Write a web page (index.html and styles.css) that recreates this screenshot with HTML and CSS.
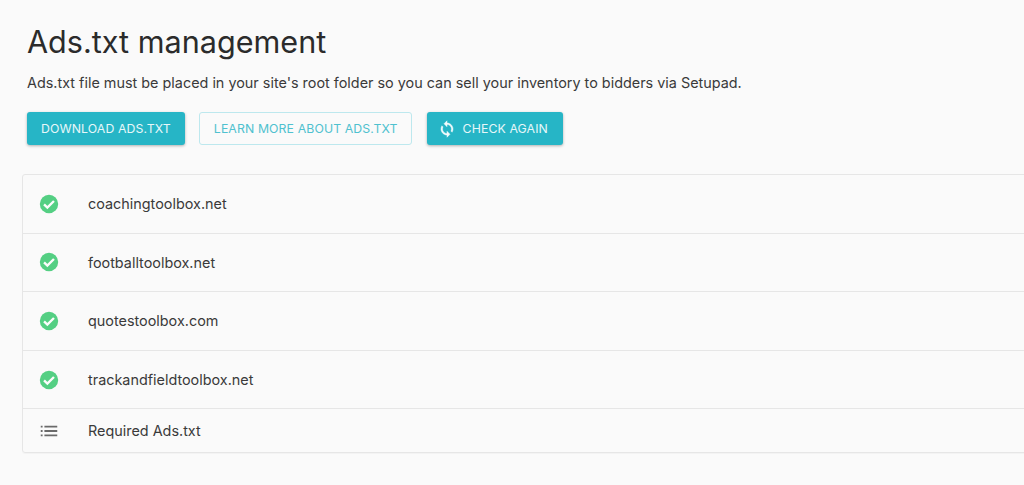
FILE: index.html
```html
<!DOCTYPE html>
<html lang="en">
<head>
<meta charset="utf-8">
<title>Ads.txt management</title>
<link rel="stylesheet" href="styles.css">
</head>
<body>
<main class="page">
  <header class="intro">
    <h1 class="title">Ads.txt management</h1>
    <p class="lead">Ads.txt file must be placed in your site's root folder so you can sell your inventory to bidders via Setupad.</p>
    <div class="actions">
      <button class="btn btn-solid">Download Ads.txt</button>
      <button class="btn btn-outline">Learn more about Ads.txt</button>
      <button class="btn btn-solid btn-icon">
        <svg class="sync" viewBox="0 0 24 24" aria-hidden="true"><path d="M12 4V1L8 5l4 4V6c3.31 0 6 2.69 6 6 0 1.01-.25 1.97-.7 2.8l1.46 1.46C19.54 15.03 20 13.57 20 12c0-4.42-3.58-8-8-8zm0 14c-3.31 0-6-2.69-6-6 0-1.01.25-1.97.7-2.8L5.24 7.74C4.46 8.97 4 10.43 4 12c0 4.42 3.58 8 8 8v3l4-4-4-4v3z"/></svg>
        <span>Check again</span>
      </button>
    </div>
  </header>
  <ul class="list">
    <li class="row">
      <svg class="check" viewBox="0 0 24 24" aria-hidden="true"><circle cx="12" cy="12" r="10"/><path class="tick" d="M6.6 12.4l3.6 3.5 7.2-7.2"/></svg>
      <span>coachingtoolbox.net</span>
    </li>
    <li class="row">
      <svg class="check" viewBox="0 0 24 24" aria-hidden="true"><circle cx="12" cy="12" r="10"/><path class="tick" d="M6.6 12.4l3.6 3.5 7.2-7.2"/></svg>
      <span>footballtoolbox.net</span>
    </li>
    <li class="row">
      <svg class="check" viewBox="0 0 24 24" aria-hidden="true"><circle cx="12" cy="12" r="10"/><path class="tick" d="M6.6 12.4l3.6 3.5 7.2-7.2"/></svg>
      <span>quotestoolbox.com</span>
    </li>
    <li class="row">
      <svg class="check" viewBox="0 0 24 24" aria-hidden="true"><circle cx="12" cy="12" r="10"/><path class="tick" d="M6.6 12.4l3.6 3.5 7.2-7.2"/></svg>
      <span>trackandfieldtoolbox.net</span>
    </li>
    <li class="row row-short">
      <svg class="lines" viewBox="0 0 24 24" aria-hidden="true"><path d="M3 6.2h2v2H3zM3 11h2v2H3zM3 15.8h2v2H3zM7 6.2h14v2H7zM7 11h14v2H7zM7 15.8h14v2H7z"/></svg>
      <span>Required Ads.txt</span>
    </li>
  </ul>
</main>
</body>
</html>
```
FILE: styles.css
```css
html, body {
  margin: 0;
  padding: 0;
  height: 100%;
  overflow: hidden;
  background: #fafafa;
}
body {
  font-family: Inter, "Liberation Sans", sans-serif;
  color: #3a3a3a;
}
.page {
  padding: 22px 0 0 22px;
}
.intro {
  padding-left: 5px;
}
.title {
  margin: 0;
  font-size: 30.6px;
  line-height: 40px;
  font-weight: 400;
  color: #2b2b2b;
}
.lead {
  margin: 10px 0 0;
  font-size: 14.4px;
  line-height: 22px;
}
.actions {
  display: flex;
  gap: 14.5px;
  margin-top: 18px;
}
.btn {
  height: 33px;
  padding: 0 13px;
  border: 1px solid transparent;
  border-radius: 3px;
  font-family: inherit;
  font-size: 12.3px;
  font-weight: 400;
  text-transform: uppercase;
  letter-spacing: 0.1px;
  display: inline-flex;
  align-items: center;
  gap: 7px;
}
.btn-solid {
  background: #26b5c6;
  color: #e6f7f9;
  box-shadow: 0 1px 3px rgba(0, 0, 0, 0.3);
}
.btn-outline {
  padding: 0 13.5px;
  background: transparent;
  border-color: #bde8ee;
  color: #4fc1cf;
}
.btn-icon {
  padding-left: 10px;
  padding-right: 14px;
}
.sync {
  width: 18px;
  height: 18px;
  fill: #f4fbfc;
  stroke: #f4fbfc;
  stroke-width: 0.6;
}
.list {
  list-style: none;
  margin: 29px 0 0;
  padding: 0;
  width: calc(100% + 20px);
  border: 1px solid #e6e6e6;
  border-radius: 3px;
  box-shadow: 0 1px 1px rgba(0, 0, 0, 0.03);
}
.row {
  display: flex;
  align-items: center;
  gap: 28.5px;
  height: 57.6px;
  padding-left: 14.5px;
  font-size: 14.4px;
  border-bottom: 1px solid #e6e6e6;
}
.row-short {
  height: 43px;
  border-bottom: 0;
}
.check, .lines {
  width: 22px;
  height: 22px;
  flex: none;
}
.check circle {
  fill: #54cf83;
}
.tick {
  fill: none;
  stroke: #fcfcfc;
  stroke-width: 2.6;
}
.lines {
  fill: #6a6a6a;
}
```
